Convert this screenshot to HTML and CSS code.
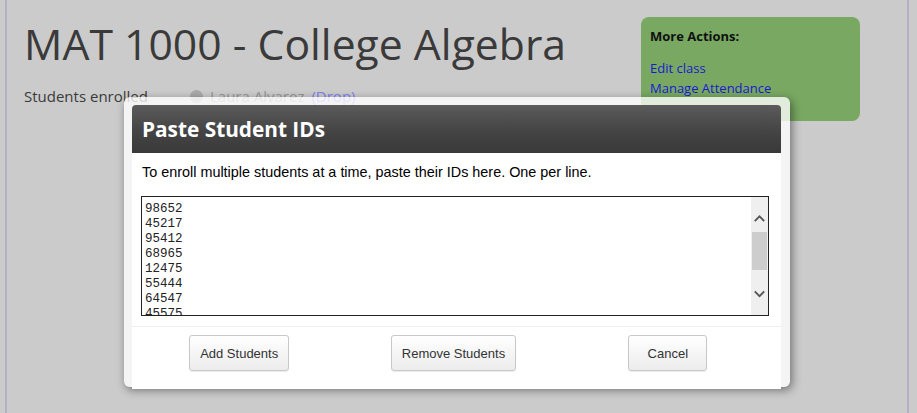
FILE: index.html
```html
<!DOCTYPE html>
<html lang="en">
<head>
  <meta charset="UTF-8">
  <title>MAT 1000 - College Algebra</title>
  <link rel="stylesheet" href="styles.css">
</head>
<body>
  <div class="pagina">
    <div class="topo">
      <div class="info">
        <h1>MAT 1000 - College Algebra</h1>
        <div class="matriculados">
          <span class="rotulo">Students enrolled</span>
          <span class="radio"></span>
          <span class="aluno">Laura Alvarez</span>
          <a href="#" class="drop">(Drop)</a>
        </div>
      </div>
      <div class="acoes">
        <h4>More Actions:</h4>
        <a href="#">Edit class</a>
        <a href="#">Manage Attendance</a>
      </div>
    </div>
  </div>

  <div class="modal">
    <div class="modal-topo">Paste Student IDs</div>
    <div class="modal-corpo">
      <p class="instrucao">To enroll multiple students at a time, paste their IDs here. One per line.</p>
      <div class="ids">
        <div class="ids-texto">98652
45217
95412
68965
12475
55444
64547
45575</div>
        <div class="rolagem">
          <svg class="seta" width="13" height="9" viewBox="0 0 13 9"><path d="M1.5 7.5 L6.5 2.5 L11.5 7.5" fill="none" stroke="#555" stroke-width="2"/></svg>
          <div class="trilho"><div class="polegar"></div></div>
          <svg class="seta" width="13" height="9" viewBox="0 0 13 9"><path d="M1.5 1.5 L6.5 6.5 L11.5 1.5" fill="none" stroke="#555" stroke-width="2"/></svg>
        </div>
      </div>
      <div class="modal-rodape">
        <div class="celula"><button>Add Students</button></div>
        <div class="celula"><button>Remove Students</button></div>
        <div class="celula"><button>Cancel</button></div>
      </div>
    </div>
  </div>
</body>
</html>
```

FILE: styles.css
```css
body { margin: 0; background: #cbcbcb; font-family: "Open Sans", sans-serif; color: #3a3a3a; height: 413px; overflow: hidden; }
.pagina { margin: 0 8px 0 5px; height: 413px; border-left: 2px solid #b7b0c3; border-right: 2px solid #b7b0c3; padding: 17px 0 0 17px; box-sizing: border-box; }
.topo { display: flex; justify-content: space-between; }
h1 { font-size: 42.7px; font-weight: normal; margin: 0; line-height: 54px; }
.matriculados { display: flex; align-items: center; font-size: 15px; margin-top: 15px; }
.rotulo { width: 166px; }
.radio { width: 13px; height: 13px; border-radius: 50%; background: #a9a9a9; margin-right: 7px; }
.aluno { color: #959595; margin-right: 7px; }
.drop { color: #8080ee; text-decoration: none; }
.acoes { width: 219px; height: 104px; box-sizing: border-box; background: #78a862; border-radius: 8px; margin-right: 47px; padding: 9px 9px; font-size: 13px; }
.acoes h4 { margin: 0 0 12px; font-size: 13px; color: #111; line-height: 20px; }
.acoes a { display: block; color: #1a1ad0; text-decoration: none; line-height: 20px; }

.modal { position: absolute; left: 124px; top: 97px; width: 666px; height: 290px; box-sizing: border-box; padding: 8px 9px 8px 8px; background: rgba(255, 255, 255, 0.78); border-radius: 6px; box-shadow: 2px 3px 10px rgba(0, 0, 0, 0.45); }
.modal-topo { height: 48px; line-height: 48px; padding-left: 10px; border-radius: 4px 4px 0 0; background: linear-gradient(#5b5b5b, #444 55%, #393939); color: #fff; font-weight: bold; font-size: 20.8px; }
.modal-corpo { background: #fff; height: 226px; padding: 10px 12px 0 9px; font-family: "Liberation Sans", Arial, sans-serif; color: #000; }
.instrucao { margin: 0 0 15px 1px; font-size: 14.4px; line-height: 18px; }
.ids { display: flex; height: 120px; box-sizing: border-box; border: 1px solid #222; }
.ids-texto { flex: 1; overflow: hidden; white-space: pre; font-family: "Liberation Mono", "Courier New", monospace; font-size: 12.5px; line-height: 15px; padding: 5px 3px 0; color: #222; }
.rolagem { width: 17px; background: #efefef; display: flex; flex-direction: column; align-items: center; padding: 17px 0 17px; }
.trilho { flex: 1; width: 100%; padding: 9px 0 20px; box-sizing: border-box; }
.polegar { height: 38px; background: #cdcdcd; margin: 0 1px; }
.modal-rodape { display: grid; grid-template-columns: 1fr 1fr 1fr; border-top: 1px solid #eee; margin: 10px -12px 0 -9px; padding: 8px 6px 0 0; }
.celula { text-align: center; }
button { height: 36px; min-width: 79px; padding: 0 10px; font-family: "Liberation Sans", Arial, sans-serif; font-size: 13px; color: #333; background: linear-gradient(#fff, #ececec); border: 1px solid #c8c8c8; border-radius: 3px; box-shadow: 0 1px 1px rgba(0, 0, 0, 0.08); }
```
